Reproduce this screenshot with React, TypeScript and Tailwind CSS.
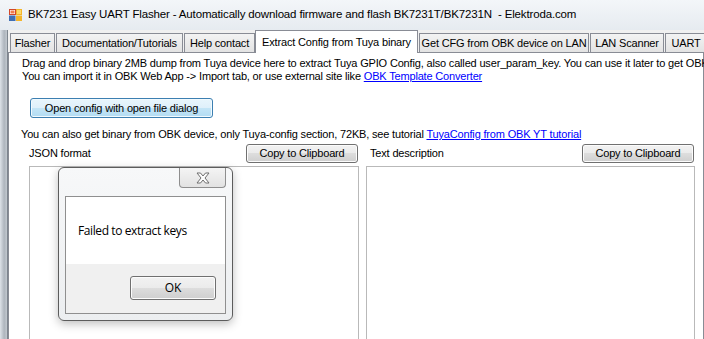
import React from "react";

const winBtn =
  "flex items-center justify-center rounded-[3px] border border-[#707070] bg-[linear-gradient(#f2f2f2_0%,#ebebeb_49%,#dddddd_50%,#cfcfcf_100%)] text-[11px] text-black shadow-[inset_0_0_0_1px_#fcfcfc]";

const tabs = [
  { label: "Flasher", w: "w-[45px]" },
  { label: "Documentation/Tutorials", w: "w-[127px]" },
  { label: "Help contact", w: "w-[71px]" },
  { label: "Extract Config from Tuya binary", w: "w-[163px]", active: true },
  { label: "Get CFG from OBK device on LAN", w: "w-[170px]" },
  { label: "LAN Scanner", w: "w-[74px]" },
  { label: "UART", w: "w-[42px]" },
];

function AppIcon() {
  return (
    <svg width="13" height="12" viewBox="0 0 13 12">
      <rect x="0.5" y="0.5" width="6" height="5" fill="#fff" stroke="#d2482a" />
      <rect x="1.5" y="1.5" width="4" height="3" fill="#f07a4c" />
      <rect x="7" y="0" width="6" height="6" fill="#f4b52a" />
      <rect x="8" y="1" width="4" height="4" fill="#fcd96a" />
      <rect x="0" y="6.5" width="6.5" height="5.5" fill="#3f6fb5" />
      <rect x="7" y="6.5" width="6" height="5.5" fill="#f4b52a" />
    </svg>
  );
}

function CloseGlyph() {
  return (
    <svg width="14" height="12" viewBox="0 0 14 12">
      <polygon
        points="1,1 4.5,1 7,4 9.5,1 13,1 9,6 13,11 9.5,11 7,8 4.5,11 1,11 5,6"
        fill="#fdfdfd"
        stroke="#6f6f6f"
        strokeWidth="1"
        strokeLinejoin="round"
      />
    </svg>
  );
}

function MessageBox() {
  return (
    <div className="absolute left-[58px] top-[167px] flex h-[154px] w-[175px] flex-col rounded-[6px] border border-[#5c5c5c] bg-[linear-gradient(#f7f8f9,#eceef0)] shadow-[0_3px_10px_rgba(0,0,0,0.25)] font-['Open_Sans',sans-serif]">
      <div className="flex h-[28px] justify-end pr-[6px]">
        <div className="flex h-[20px] w-[47px] items-center justify-center rounded-b-[4px] border border-t-0 border-[#8e8e8e] bg-[linear-gradient(#f4f4f4,#e2e2e2)]">
          <CloseGlyph />
        </div>
      </div>
      <div className="mx-[6px] mb-[6px] flex flex-1 flex-col border border-[#8f8f8f]">
        <div className="flex h-[67px] items-center bg-white pl-[12px] text-[12px] leading-none tracking-[-0.4px] text-black">
          Failed to extract keys
        </div>
        <div className="flex flex-1 items-start justify-end bg-[#f0f0f0] pr-[9px] pt-[12px]">
          <div className={winBtn + " h-[24px] w-[86px] text-[12px]"}>OK</div>
        </div>
      </div>
    </div>
  );
}

export default function App() {
  return (
    <div className="relative h-[339px] w-[704px] overflow-hidden bg-[#e3e8ee] font-['Liberation_Sans',Arial,sans-serif] text-black">
      {/* title bar */}
      <div className="flex h-[30px] items-center gap-[6px] bg-[linear-gradient(#f3f6f9,#e6ebf0)] pl-[9px]">
        <AppIcon />
        <span className="whitespace-nowrap text-[11.5px] tracking-[-0.15px] text-black">
          BK7231 Easy UART Flasher - Automatically download firmware and flash BK7231T/BK7231N&nbsp; - Elektroda.com
        </span>
      </div>

      <div className="flex h-[309px]">
        {/* left window frame */}
        <div className="w-[8px] shrink-0 border-r border-[#7d858e] bg-[linear-gradient(90deg,#dde2e8,#aeb5bd_60%,#c2c8cf)]" />

        {/* form client */}
        <div className="flex min-w-0 flex-1 flex-col bg-[#f0f0f0] tracking-[-0.17px]">
          <div className="flex h-[22px] items-end pl-[1px] pt-[1px]">
            {tabs.map((t) =>
              t.active ? (
                <div
                  key={t.label}
                  className={t.w + " relative z-10 -mb-px flex h-[23px] shrink-0 items-center justify-center whitespace-nowrap border border-b-0 border-[#898c95] bg-white text-[11px]"}
                >
                  {t.label}
                </div>
              ) : (
                <div
                  key={t.label}
                  className={t.w + " ml-px flex h-[19px] shrink-0 items-center justify-center whitespace-nowrap border border-b-0 border-[#898c95] bg-[linear-gradient(#f3f3f3,#e3e3e3)] text-[11px]"}
                >
                  {t.label}
                </div>
              )
            )}
          </div>

          <div className="flex flex-1 flex-col border border-[#898c95] bg-white pl-[13px] text-[11px] leading-[13px]">
            <div className="mt-[4px] whitespace-nowrap">
              Drag and drop binary 2MB dump from Tuya device here to extract Tuya GPIO Config, also called user_param_key. You can use it later to get OBK
            </div>
            <div className="whitespace-nowrap">
              You can import it in OBK Web App -&gt; Import tab, or use external site like{" "}
              <span className="text-[#0000ff] underline">OBK Template Converter</span>
            </div>

            <div className="ml-[8px] mt-[15px] flex h-[20px] w-[183px] items-center justify-center rounded-[3px] border border-[#3c7fb1] bg-[linear-gradient(#e8f5fc_0%,#dff0fa_49%,#c4e5f6_50%,#b2dcf3_100%)] shadow-[inset_0_0_0_1px_#f2fafe]">
              Open config with open file dialog
            </div>

            <div className="-ml-px mt-[10px] whitespace-nowrap">
              You can also get binary from OBK device, only Tuya-config section, 72KB, see tutorial{" "}
              <span className="text-[#0000ff] underline">TuyaConfig from OBK YT tutorial</span>
            </div>

            <div className="mt-[3px] flex">
              <div className="flex w-[344px] shrink-0 flex-col pl-[7px]">
                <div className="flex h-[18px] w-[330px] items-center justify-between pr-[1px]">
                  <span>JSON format</span>
                  <div className={winBtn + " h-[19px] w-[112px]"}>Copy to Clipboard</div>
                </div>
                <div className="mt-[4px] h-[200px] w-[330px] border border-[#b9b9b9]" />
              </div>
              <div className="flex w-[329px] shrink-0 flex-col">
                <div className="flex h-[18px] items-center justify-between pl-[4px] pr-[1px]">
                  <span>Text description</span>
                  <div className={winBtn + " h-[19px] w-[112px]"}>Copy to Clipboard</div>
                </div>
                <div className="mt-[4px] h-[200px] w-[329px] border border-[#b9b9b9]" />
              </div>
            </div>
          </div>
        </div>
      </div>

      <MessageBox />
    </div>
  );
}
